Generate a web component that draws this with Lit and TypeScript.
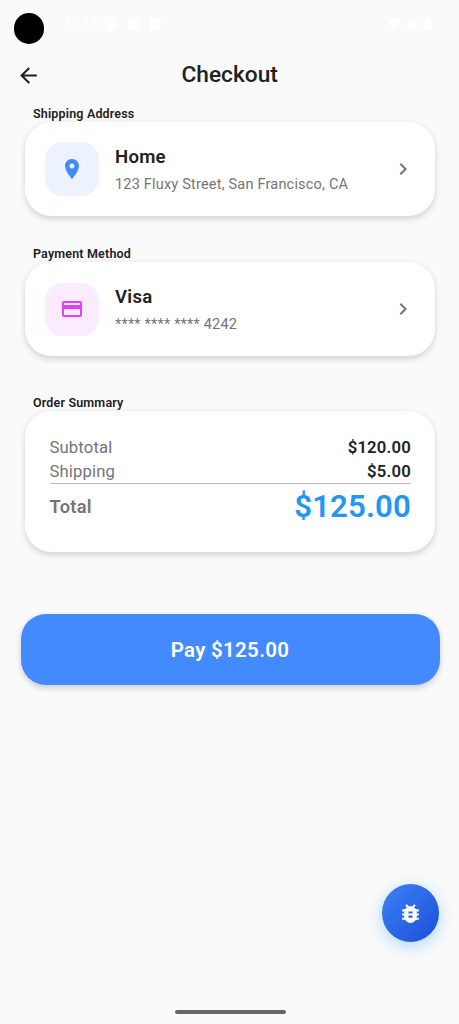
import { LitElement, html, css, svg } from "lit";
import { customElement, property } from "lit/decorators.js";

const PATHS = {
  back: "M20 11H7.83l5.59-5.59L12 4l-8 8 8 8 1.41-1.41L7.83 13H20v-2z",
  place: "M12 2C8.13 2 5 5.13 5 9c0 5.25 7 13 7 13s7-7.75 7-13c0-3.87-3.13-7-7-7zm0 9.5c-1.38 0-2.5-1.12-2.5-2.5s1.12-2.5 2.5-2.5 2.5 1.12 2.5 2.5-1.12 2.5-2.5 2.5z",
  card: "M20 4H4c-1.11 0-1.99.89-1.99 2L2 18c0 1.11.89 2 2 2h16c1.11 0 2-.89 2-2V6c0-1.11-.89-2-2-2zm0 14H4v-6h16v6zm0-10H4V6h16v2z",
  chevron: "M10 6L8.59 7.41 13.17 12l-4.58 4.59L10 18l6-6z",
  bug: "M20 8h-2.81c-.45-.78-1.07-1.45-1.82-1.96L17 4.41 15.59 3l-2.17 2.17C12.96 5.06 12.49 5 12 5s-.96.06-1.41.17L8.41 3 7 4.41l1.62 1.63C7.88 6.55 7.26 7.22 6.81 8H4v2h2.09c-.05.33-.09.66-.09 1v1H4v2h2v1c0 .34.04.67.09 1H4v2h2.81c1.04 1.79 2.97 3 5.19 3s4.15-1.21 5.19-3H20v-2h-2.09c.05-.33.09-.66.09-1v-1h2v-2h-2v-1c0-.34-.04-.67-.09-1H20V8zm-6 8h-4v-2h4v2zm0-4h-4v-2h4v2z",
  shield: "M12 1L3 5v6c0 5.55 3.84 10.74 9 12 5.16-1.26 9-6.45 9-12V5zM9.5 7.5l6 4.5-6 4.5z",
  sd: "M18 2h-8L4 8v12c0 1.1.9 2 2 2h12c1.1 0 2-.9 2-2V4c0-1.100-.9-2-2-2zM9.500 5h1.500v3H9.500zM12.500 5H14v3h-1.500zM15.500 5H17v3h-1.500z",
  letter: "M5 3h14a2 2 0 012 2v14a2 2 0 01-2 2H5a2 2 0 01-2-2V5a2 2 0 012-2zm6 4L7 17h2l.8-2.200h4.400L15 17h2L13 7zm1 2.500l1.400 3.700h-2.800z",
  wifi: "M12 22L1 7C4 4.300 7.800 3 12 3S20 4.300 23 7z",
  signal: "M2 22L22 2v5h-5v10h-2v5zM18 9h2v8h-2zm0 10h2v2h-2z",
  battery: "M16.500 4H15V2H9v2H7.500C6.700 4 6 4.700 6 5.300v15.400c0 .7.700 1.300 1.300 1.300h9.400c.7 0 1.300-.6 1.300-1.300V5.300c0-.7-.7-1.300-1.500-1.300z",
};
type IconName = keyof typeof PATHS;

@customElement("ui-icon")
class UiIcon extends LitElement {
  @property() name: IconName = "back";
  static styles = css`
    :host { display: block; flex: none; width: 26.800px; height: 26.800px; }
    svg { display: block; width: 100%; height: 100%; fill: currentColor; }
  `;
  render() {
    return html`<svg viewBox="0 0 24 24" aria-hidden="true">${svg`<path fill-rule="evenodd" d=${PATHS[this.name]}></path>`}</svg>`;
  }
}

@customElement("option-card")
class OptionCard extends LitElement {
  @property() icon: IconName = "place";
  @property() heading = "";
  @property() detail = "";
  static styles = css`
    :host {
      display: flex; align-items: center; box-sizing: border-box;
      height: 94px; padding: 0 20.500px 0 20px; border-radius: 26.800px; background: #fff;
      box-shadow: 0 2.500px 6px rgba(0, 0, 0, 0.16);
    }
    .tile {
      display: flex; align-items: center; justify-content: center;
      width: 54px; height: 53.500px; border-radius: 18px;
      background: #ecf3ff; color: #448aff;
    }
    .tile.card { background: #fbebff; color: #e040fb; }
    .tile ui-icon { width: 24px; height: 24px; }
    .copy { flex: 1; padding: 2px 0 0 16px; }
    .heading { font-size: 18.600px; line-height: 26px; font-weight: 600; letter-spacing: 0.250px; color: #212121; }
    .detail { margin-top: 3px; font-size: 14.500px; line-height: 23px; letter-spacing: 0.200px; color: #757575; white-space: nowrap; }
    .chevron { width: 24px; height: 24px; color: #757575; }
  `;
  render() {
    return html`
      <div class="tile ${this.icon}"><ui-icon name=${this.icon}></ui-icon></div>
      <div class="copy">
        <div class="heading">${this.heading}</div>
        <div class="detail">${this.detail}</div>
      </div>
      <ui-icon class="chevron" name="chevron"></ui-icon>
    `;
  }
}

@customElement("app-root")
class AppRoot extends LitElement {
  static styles = css`
    :host {
      display: flex; flex-direction: column; position: relative; box-sizing: border-box;
      height: 1024px; overflow: hidden; background: #fafafa; color: #212121;
      font-family: Roboto, sans-serif;
    }
    .status { display: flex; align-items: flex-start; height: 48px; padding: 0 24px 0 13.500px; box-sizing: border-box; color: #fff; }
    .camera { width: 30.500px; height: 30.500px; margin-top: 13px; border-radius: 50%; background: #000; }
    .clock { width: 36px; margin: 13px 0 0 19px; font-size: 15px; line-height: 20px; letter-spacing: -0.300px; white-space: nowrap; }
    .notes { display: flex; gap: 7.500px; margin: 15.500px 0 0 4px; }
    .system { display: flex; gap: 1.500px; margin: 15.500px 0 0 auto; }
    .status ui-icon { width: 15px; height: 15px; }
    .bar { display: grid; grid-template-columns: 26.800px 1fr 26.800px; align-items: center; height: 54px; padding: 0 15.600px 0 16px; }
    .bar ui-icon { width: 25px; height: 25px; }
    .title { margin-top: -1px; text-align: center; font-size: 22.700px; line-height: 28px; font-weight: 500; }
    section { padding: 0 24px 0 25px; }
    .label { height: 18px; padding: 0 8px; font-size: 12.500px; line-height: 19px; font-weight: 600; letter-spacing: 0.170px; }
    .shipping { padding-top: 2px; }
    .payment { padding-top: 28.400px; }
    .order { padding-top: 36.600px; }
    .summary {
      box-sizing: border-box; height: 141.500px; padding: 25px 24px 25px 24.500px; border-radius: 26.800px; background: #fff;
      box-shadow: 0 2.500px 6px rgba(0, 0, 0, 0.16);
    }
    .row { display: flex; justify-content: space-between; align-items: center; height: 23.500px; font-size: 16.700px; letter-spacing: 0.120px; color: #757575; }
    .amount { color: #212121; font-weight: 600; letter-spacing: 0.200px; }
    .total { height: 45px; border-top: 1px solid #bdbdbd; font-size: 18.300px; font-weight: 600; letter-spacing: 0.300px; }
    .grand { font-size: 31.200px; font-weight: 600; letter-spacing: 0.150px; color: #2196f3; }
    .pay {
      display: block; height: 70.500px; margin: 61.800px 19.500px 0 20.500px; padding: 0; border: 0;
      border-radius: 25px; background: #448aff; color: #fff; box-shadow: 0 2.500px 6px rgba(0, 0, 0, 0.18);
      font: 600 20.500px/70px Roboto, sans-serif; letter-spacing: 0.300px;
    }
    .fab {
      position: absolute; right: 20px; bottom: 82px; display: flex; align-items: center; justify-content: center;
      width: 57.500px; height: 58px; padding: 0; border: 0; border-radius: 50%; color: #fff;
      background: linear-gradient(135deg, #3b82f6, #1d4ed8); box-shadow: 0 4px 16px rgba(33, 150, 243, 0.36);
    }
    .fab ui-icon { width: 25px; height: 25px; }
    .handle { width: 111px; height: 4px; margin: auto 173.500px 10px 174.500px; border-radius: 2px; background: #666; }
  `;
  render() {
    return html`
      <div class="status">
        <div class="camera"></div>
        <div class="clock">12:16</div>
        <div class="notes">
          <ui-icon name="shield"></ui-icon><ui-icon name="sd"></ui-icon><ui-icon name="letter"></ui-icon>
        </div>
        <div class="system">
          <ui-icon name="wifi"></ui-icon><ui-icon name="signal"></ui-icon><ui-icon name="battery"></ui-icon>
        </div>
      </div>
      <header class="bar"><ui-icon name="back"></ui-icon><div class="title">Checkout</div></header>
      <section class="shipping">
        <div class="label">Shipping Address</div>
        <option-card icon="place" heading="Home" detail="123 Fluxy Street, San Francisco, CA"></option-card>
      </section>
      <section class="payment">
        <div class="label">Payment Method</div>
        <option-card icon="card" heading="Visa" detail="**** **** **** 4242"></option-card>
      </section>
      <section class="order">
        <div class="label">Order Summary</div>
        <div class="summary">
          <div class="row"><span>Subtotal</span><span class="amount">$120.00</span></div>
          <div class="row"><span>Shipping</span><span class="amount">$5.00</span></div>
          <div class="row total"><span>Total</span><span class="grand">$125.00</span></div>
        </div>
      </section>
      <button class="pay">Pay $125.00</button>
      <button class="fab" aria-label="Debug"><ui-icon name="bug"></ui-icon></button>
      <div class="handle"></div>
    `;
  }
}
